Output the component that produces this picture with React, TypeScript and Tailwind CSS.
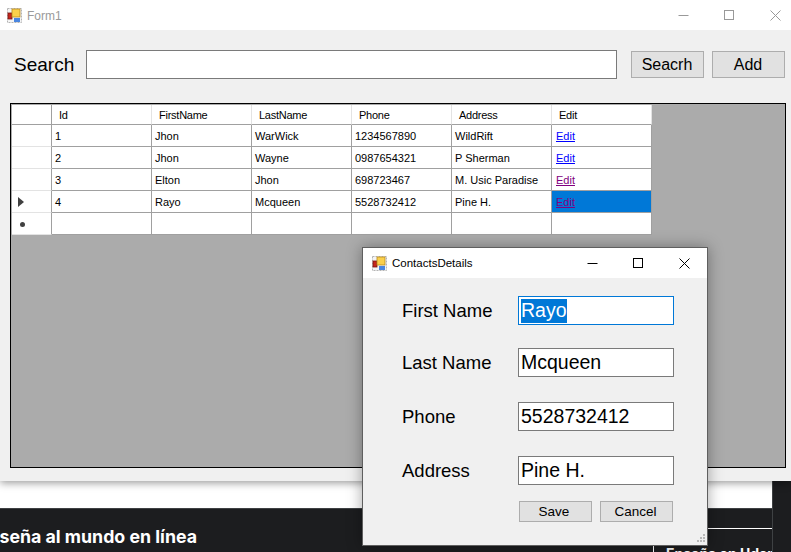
import React from 'react';

const columns = ['Id', 'FirstName', 'LastName', 'Phone', 'Address', 'Edit'];

const contacts = [
    { id: '1', first: 'Jhon', last: 'WarWick', phone: '1234567890', address: 'WildRift', visited: false },
    { id: '2', first: 'Jhon', last: 'Wayne', phone: '0987654321', address: 'P Sherman', visited: false },
    { id: '3', first: 'Elton', last: 'Jhon', phone: '698723467', address: 'M. Usic Paradise', visited: true },
    { id: '4', first: 'Rayo', last: 'Mcqueen', phone: '5528732412', address: 'Pine H.', visited: true },
];

const fields = [
    { label: 'First Name', value: 'Rayo', margin: 'mt-[18px]' },
    { label: 'Last Name', value: 'Mcqueen', margin: 'mt-[23px]' },
    { label: 'Phone', value: '5528732412', margin: 'mt-[25px]' },
    { label: 'Address', value: 'Pine H.', margin: 'mt-[25px]' },
];

function FormIcon() {
    return (
        <svg width="15" height="15" viewBox="0 0 15 15" className="shrink-0">
            <rect x="0.5" y="0.5" width="14" height="14" fill="#f4f4f4" stroke="#b4b4b4" strokeDasharray="2 1" />
            <rect x="1" y="5" width="4" height="6" fill="#c4261d" stroke="#7a1410" strokeWidth="0.8" />
            <rect x="5" y="1" width="8" height="8" fill="#fbd04b" stroke="#b98a1e" strokeWidth="0.8" />
            <rect x="7" y="10" width="6" height="4" fill="#4a86e0" />
        </svg>
    );
}

function WindowButtons({ color, spacing }: { color: string; spacing: string }) {
    return (
        <div className={`flex items-center ${spacing}`}>
            <svg width="11" height="11" viewBox="0 0 11 11">
                <path d="M0.5 5.5H10.5" stroke={color} fill="none" />
            </svg>
            <svg width="11" height="11" viewBox="0 0 11 11">
                <rect x="0.5" y="0.5" width="9" height="9" stroke={color} fill="none" />
            </svg>
            <svg width="11" height="11" viewBox="0 0 11 11">
                <path d="M0.5 0.5L10.5 10.5M10.5 0.5L0.5 10.5" stroke={color} fill="none" />
            </svg>
        </div>
    );
}

function Cell({ children }: { children?: React.ReactNode }) {
    return (
        <div className="flex items-center border-r border-b border-[#a0a0a0] bg-white pt-[1px] pl-[3px] whitespace-nowrap">
            {children}
        </div>
    );
}

function RowHeader({ children }: { children?: React.ReactNode }) {
    return (
        <div className="flex items-center border-r border-b border-r-[#a0a0a0] border-b-[#e3e3e3] bg-white pl-[6px]">
            {children}
        </div>
    );
}

function ContactsGrid() {
    return (
        <div className="grid w-[640px] grid-cols-[40px_repeat(6,100px)] grid-rows-[20px_repeat(5,22px)] text-[11px] text-black">
            <div className="border-r border-b border-r-[#a0a0a0] border-b-[#a0a0a0] bg-white" />
            {columns.map((name) => (
                <div key={name} className="flex items-center border-r border-b border-r-[#e3e3e3] border-b-[#a0a0a0] bg-white pt-[1px] pl-[7px] tracking-[-0.25px]">
                    {name}
                </div>
            ))}

            {contacts.map((contact, index) => (
                <React.Fragment key={contact.id}>
                    <RowHeader>
                        {index === 3 && (
                            <svg width="6" height="10" viewBox="0 0 6 10">
                                <path d="M0 0L6 5L0 10Z" fill="#404040" />
                            </svg>
                        )}
                    </RowHeader>
                    <Cell>{contact.id}</Cell>
                    <Cell>{contact.first}</Cell>
                    <Cell>{contact.last}</Cell>
                    <Cell>{contact.phone}</Cell>
                    <Cell>{contact.address}</Cell>
                    <div className={`flex items-center border-r border-b border-[#a0a0a0] pt-[1px] pl-[4px] ${index === 3 ? 'bg-[#0078d7]' : 'bg-white'}`}>
                        <span className={`underline ${contact.visited ? 'text-[#800080]' : 'text-[#0000ff]'}`}>Edit</span>
                    </div>
                </React.Fragment>
            ))}

            <RowHeader>
                <span className="mt-[2px] ml-[2px] h-[5px] w-[5px] rounded-full bg-[#404040]" />
            </RowHeader>
            <Cell />
            <Cell />
            <Cell />
            <Cell />
            <Cell />
            <Cell />
        </div>
    );
}

function ContactsDetails() {
    return (
        <div className="absolute top-[247px] left-[362px] z-20 flex h-[299px] w-[346px] flex-col border border-[#5f5f5f] bg-[#f0f0f0] shadow-[0_0_14px_rgba(0,0,0,0.35)]">
            <div className="flex h-[30px] shrink-0 items-center justify-between bg-white pr-[17px] pl-[9px]">
                <div className="flex items-center gap-[5px] text-[11.5px] text-black">
                    <FormIcon />
                    <span className="pt-[1px]">ContactsDetails</span>
                </div>
                <WindowButtons color="#000000" spacing="gap-[35px]" />
            </div>

            {fields.map((field, index) => (
                <div key={field.label} className={`flex h-[29px] items-center pl-[39px] ${field.margin}`}>
                    <span className="w-[116px] text-[18.5px] text-black">{field.label}</span>
                    <div className={`flex h-[29px] w-[156px] items-center border bg-white pl-[2px] text-[19.5px] text-black ${index === 0 ? 'border-[#0078d7]' : 'border-[#7a7a7a]'}`}>
                        {index === 0 ? (
                            <span className="flex h-[24px] items-center bg-[#0078d7] text-white">{field.value}</span>
                        ) : (
                            field.value
                        )}
                    </div>
                </div>
            ))}

            <div className="mt-[16px] ml-[156px] flex gap-[8px]">
                <button className="h-[21px] w-[73px] border border-[#adadad] bg-[#e1e1e1] pr-[3px] text-[13.5px] text-black">Save</button>
                <button className="h-[21px] w-[73px] border border-[#adadad] bg-[#e1e1e1] pr-[2px] text-[13.5px] text-black">Cancel</button>
            </div>

            <svg width="10" height="10" viewBox="0 0 10 10" className="absolute right-[1px] bottom-[1px]">
                <path d="M7 0h2v2H7zM4 3h2v2H4zM7 3h2v2H7zM1 6h2v2H1zM4 6h2v2H4zM7 6h2v2H7z" fill="#b8b8b8" />
            </svg>
        </div>
    );
}

export default function App() {
    return (
        <div className="relative flex h-[552px] w-[791px] flex-col overflow-hidden bg-white font-['Liberation_Sans',Arial,sans-serif]">
            {/* Form1 */}
            <div className="relative z-10 flex h-[481px] shrink-0 flex-col bg-[#f0f0f0] shadow-[0_2px_8px_rgba(0,0,0,0.4)]">
                <div className="flex h-[30px] shrink-0 items-center justify-between bg-white pr-[10px] pl-[7px]">
                    <div className="flex items-center gap-[5px] text-[12px] text-[#9a9a9a]">
                        <FormIcon />
                        <span className="pt-[1px]">Form1</span>
                    </div>
                    <WindowButtons color="#999999" spacing="gap-[35px]" />
                </div>

                <div className="mt-[20px] flex h-[29px] items-center pl-[14px]">
                    <span className="w-[72px] pt-[2px] text-[19px] text-black">Search</span>
                    <div className="h-[29px] w-[531px] border border-[#7a7a7a] bg-white" />
                    <button className="ml-[14px] h-[27px] w-[73px] border border-[#adadad] bg-[#e1e1e1] pr-[1px] text-[16px] text-black">Seacrh</button>
                    <button className="ml-[8px] h-[27px] w-[73px] border border-[#adadad] bg-[#e1e1e1] pr-[1px] text-[16px] text-black">Add</button>
                </div>

                <div className="mt-[24px] ml-[10px] h-[365px] w-[776px] border border-black bg-[#ababab] p-[1px]">
                    <ContactsGrid />
                </div>
            </div>

            {/* what is behind the window */}
            <div className="flex min-h-0 flex-1">
                <div className="flex flex-1 flex-col">
                    <div className="h-[27px] shrink-0 bg-white" />
                    <div className="flex flex-1 border-t border-[#3e4143] bg-[#1c1d1f]">
                        <div className="flex w-[197px] justify-end overflow-hidden pt-[18px]">
                            <span className="shrink-0 font-['Inter',sans-serif] text-[17.75px] leading-[20px] font-bold whitespace-nowrap text-white">Enseña al mundo en línea</span>
                        </div>
                        <div className="mt-[19px] ml-auto w-[119px] overflow-hidden border-t border-l border-white pt-[13px] pl-[12px]">
                            <span className="font-['Inter',sans-serif] text-[14px] leading-[18px] font-bold whitespace-nowrap text-white">Enseña en Udemy</span>
                        </div>
                    </div>
                </div>
                <div className="w-[19px] shrink-0 border-l border-[#3e4143] bg-[#1c1d1f]" />
            </div>

            <ContactsDetails />
        </div>
    );
}
